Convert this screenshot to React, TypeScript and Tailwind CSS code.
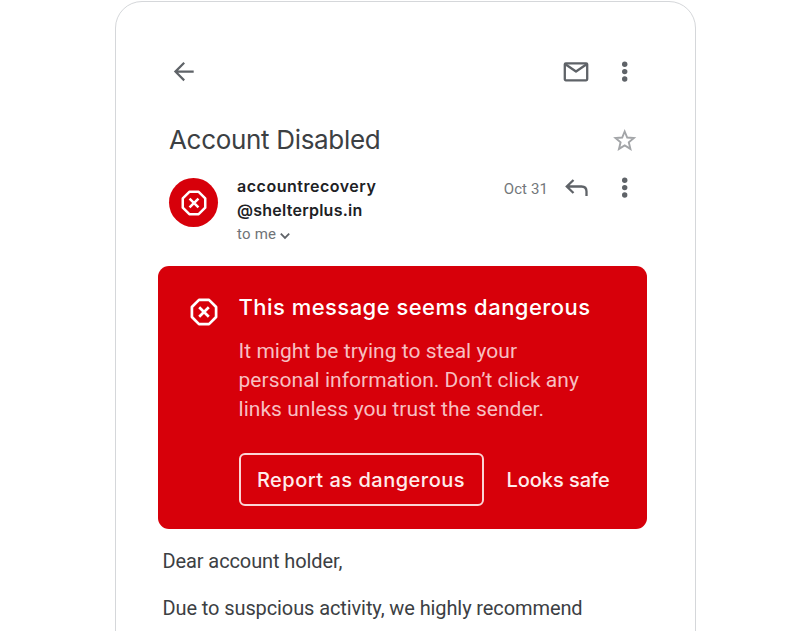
const sans = "font-['Inter','Liberation_Sans',sans-serif]";

function Dots() {
  return (
    <svg className="block h-[22px] w-2" viewBox="0 0 8 22" fill="#5f6368">
      <circle cx="3.7" cy="3.2" r="2.7" />
      <circle cx="3.7" cy="10.6" r="2.7" />
      <circle cx="3.7" cy="18" r="2.7" />
    </svg>
  );
}

function Danger({ className }: { className: string }) {
  return (
    <svg className={className} viewBox="0 0 28 28" fill="none" stroke="#fff" strokeWidth="2.7">
      <path d="M9 1.9h10L26.1 9v10L19 26.1H9L1.9 19V9z" strokeLinejoin="round" />
      <path d="M9.2 9.2l9.6 9.6M18.8 9.2l-9.6 9.6" />
    </svg>
  );
}

export default function App() {
  return (
    <div className="flex h-[631px] w-[811px] items-start overflow-hidden bg-white pt-px pl-[115px] font-['Roboto',sans-serif]">
      <div className="h-[700px] w-[581px] shrink-0 rounded-[27px] border border-[#d5d7da]">
        <header className="mt-14 flex h-7 items-center justify-between pr-[66px] pl-[57px]">
          <svg className="h-5 w-[21px]" viewBox="0 0 21 20" fill="none" stroke="#5f6368" strokeWidth="2.2">
            <path d="M20.700 9.600H3M11.200 .8L2.400 9.600l8.800 8.800" />
          </svg>
          <div className="flex items-center gap-8">
            <svg className="h-5 w-[26px]" viewBox="0 0 26 20" fill="none" stroke="#5f6368" strokeWidth="2.3" strokeLinejoin="round">
              <rect x="1.8" y="1.3" width="22.4" height="17" rx="1" />
              <path d="M2 2l11 7.500L24 2" />
            </svg>
            <Dots />
          </div>
        </header>

        <div className="mt-[37px] flex h-8 items-center justify-between pr-[58px] pl-[53px]">
          <h1 className={`${sans} text-[26px] tracking-[-0.32px] whitespace-nowrap text-[#3c4043]`}>Account Disabled</h1>
          <svg className="mt-px h-6 w-6" viewBox="0 0 24 24" fill="none" stroke="#a3a5a8" strokeWidth="1.9">
            <path d="M11.700 3.500l2.500 6 6.700.5-5.100 4.300 1.600 6.600-5.700-3.500L6 20.900l1.600-6.600L2.500 10l6.700-.5z" />
          </svg>
        </div>

        <div className="mt-[19px] flex h-[72px] items-start pr-[66px] pl-[53px]">
          <div className="mt-1 flex h-[49px] w-[49px] items-center justify-center rounded-full bg-[#d7000a]">
            <Danger className="h-[26px] w-[26px]" />
          </div>
          <div className="ml-[19px] whitespace-nowrap">
            <div className={`${sans} text-base leading-6 font-semibold text-[#202124]`}>
              <p className="tracking-[0.52px]">accountrecovery</p>
              <p className="tracking-[0.25px]">@shelterplus.in</p>
            </div>
            <div className="flex items-center text-[15px] leading-6 tracking-[0.2px] text-[#6f7377]">
              to me
              <svg className="mt-1 ml-1 h-2 w-[10px]" viewBox="0 0 10 8" fill="none" stroke="#5f6368" strokeWidth="1.8">
                <path d="M.8 1.700L5 5.900l4.200-4.200" />
              </svg>
            </div>
          </div>
          <div className="ml-auto flex h-7 items-center">
            <span className="mt-[3px] text-[15px] tracking-[0.1px] text-[#73777b]">Oct 31</span>
            <svg className="ml-[17px] h-[18px] w-[23px]" viewBox="0 0 23 18" fill="none" stroke="#5f6368" strokeWidth="2.3">
              <path d="M8.500 1L1.800 7.500l6.700 6.500M2 7.500h14.500q5 0 5 5v4.500" />
            </svg>
            <div className="ml-[33px]">
              <Dots />
            </div>
          </div>
        </div>

        <section className="mt-5 ml-[41.500px] flex h-[263px] w-[489px] rounded-[11px] bg-[#d7000a] pt-[27px] pl-8">
          <Danger className="mt-[5px] h-7 w-7 shrink-0" />
          <div className="ml-[21px] whitespace-nowrap">
            <h2 className={`${sans} text-[22px] leading-7 font-medium tracking-[0.46px] text-white`}>
              This message seems dangerous
            </h2>
            <p className="mt-4 text-[21px] leading-[29px] tracking-[0.03px] text-[#f7bfc1]">
              It might be trying to steal your
              <br />
              personal information. Don’t click any
              <br />
              links unless you trust the sender.
            </p>
            <div className={`${sans} mt-[29px] flex h-[53px] items-center text-[20px] font-medium text-[#ffecec]`}>
              <button className="flex h-[53px] w-[245px] items-center justify-center rounded-md border-2 border-[#fbd5d6] tracking-[0.5px]">
                Report as dangerous
              </button>
              <button className="ml-[23px] tracking-[-0.05px]">Looks safe</button>
            </div>
          </div>
        </section>

        <div className="mt-[19px] pl-[46.500px] text-[20px] leading-[27px] tracking-[-0.1px] whitespace-nowrap text-[#3c4043]">
          <p>Dear account holder,</p>
          <p className="mt-5">Due to suspcious activity, we highly recommend</p>
        </div>
      </div>
    </div>
  );
}
